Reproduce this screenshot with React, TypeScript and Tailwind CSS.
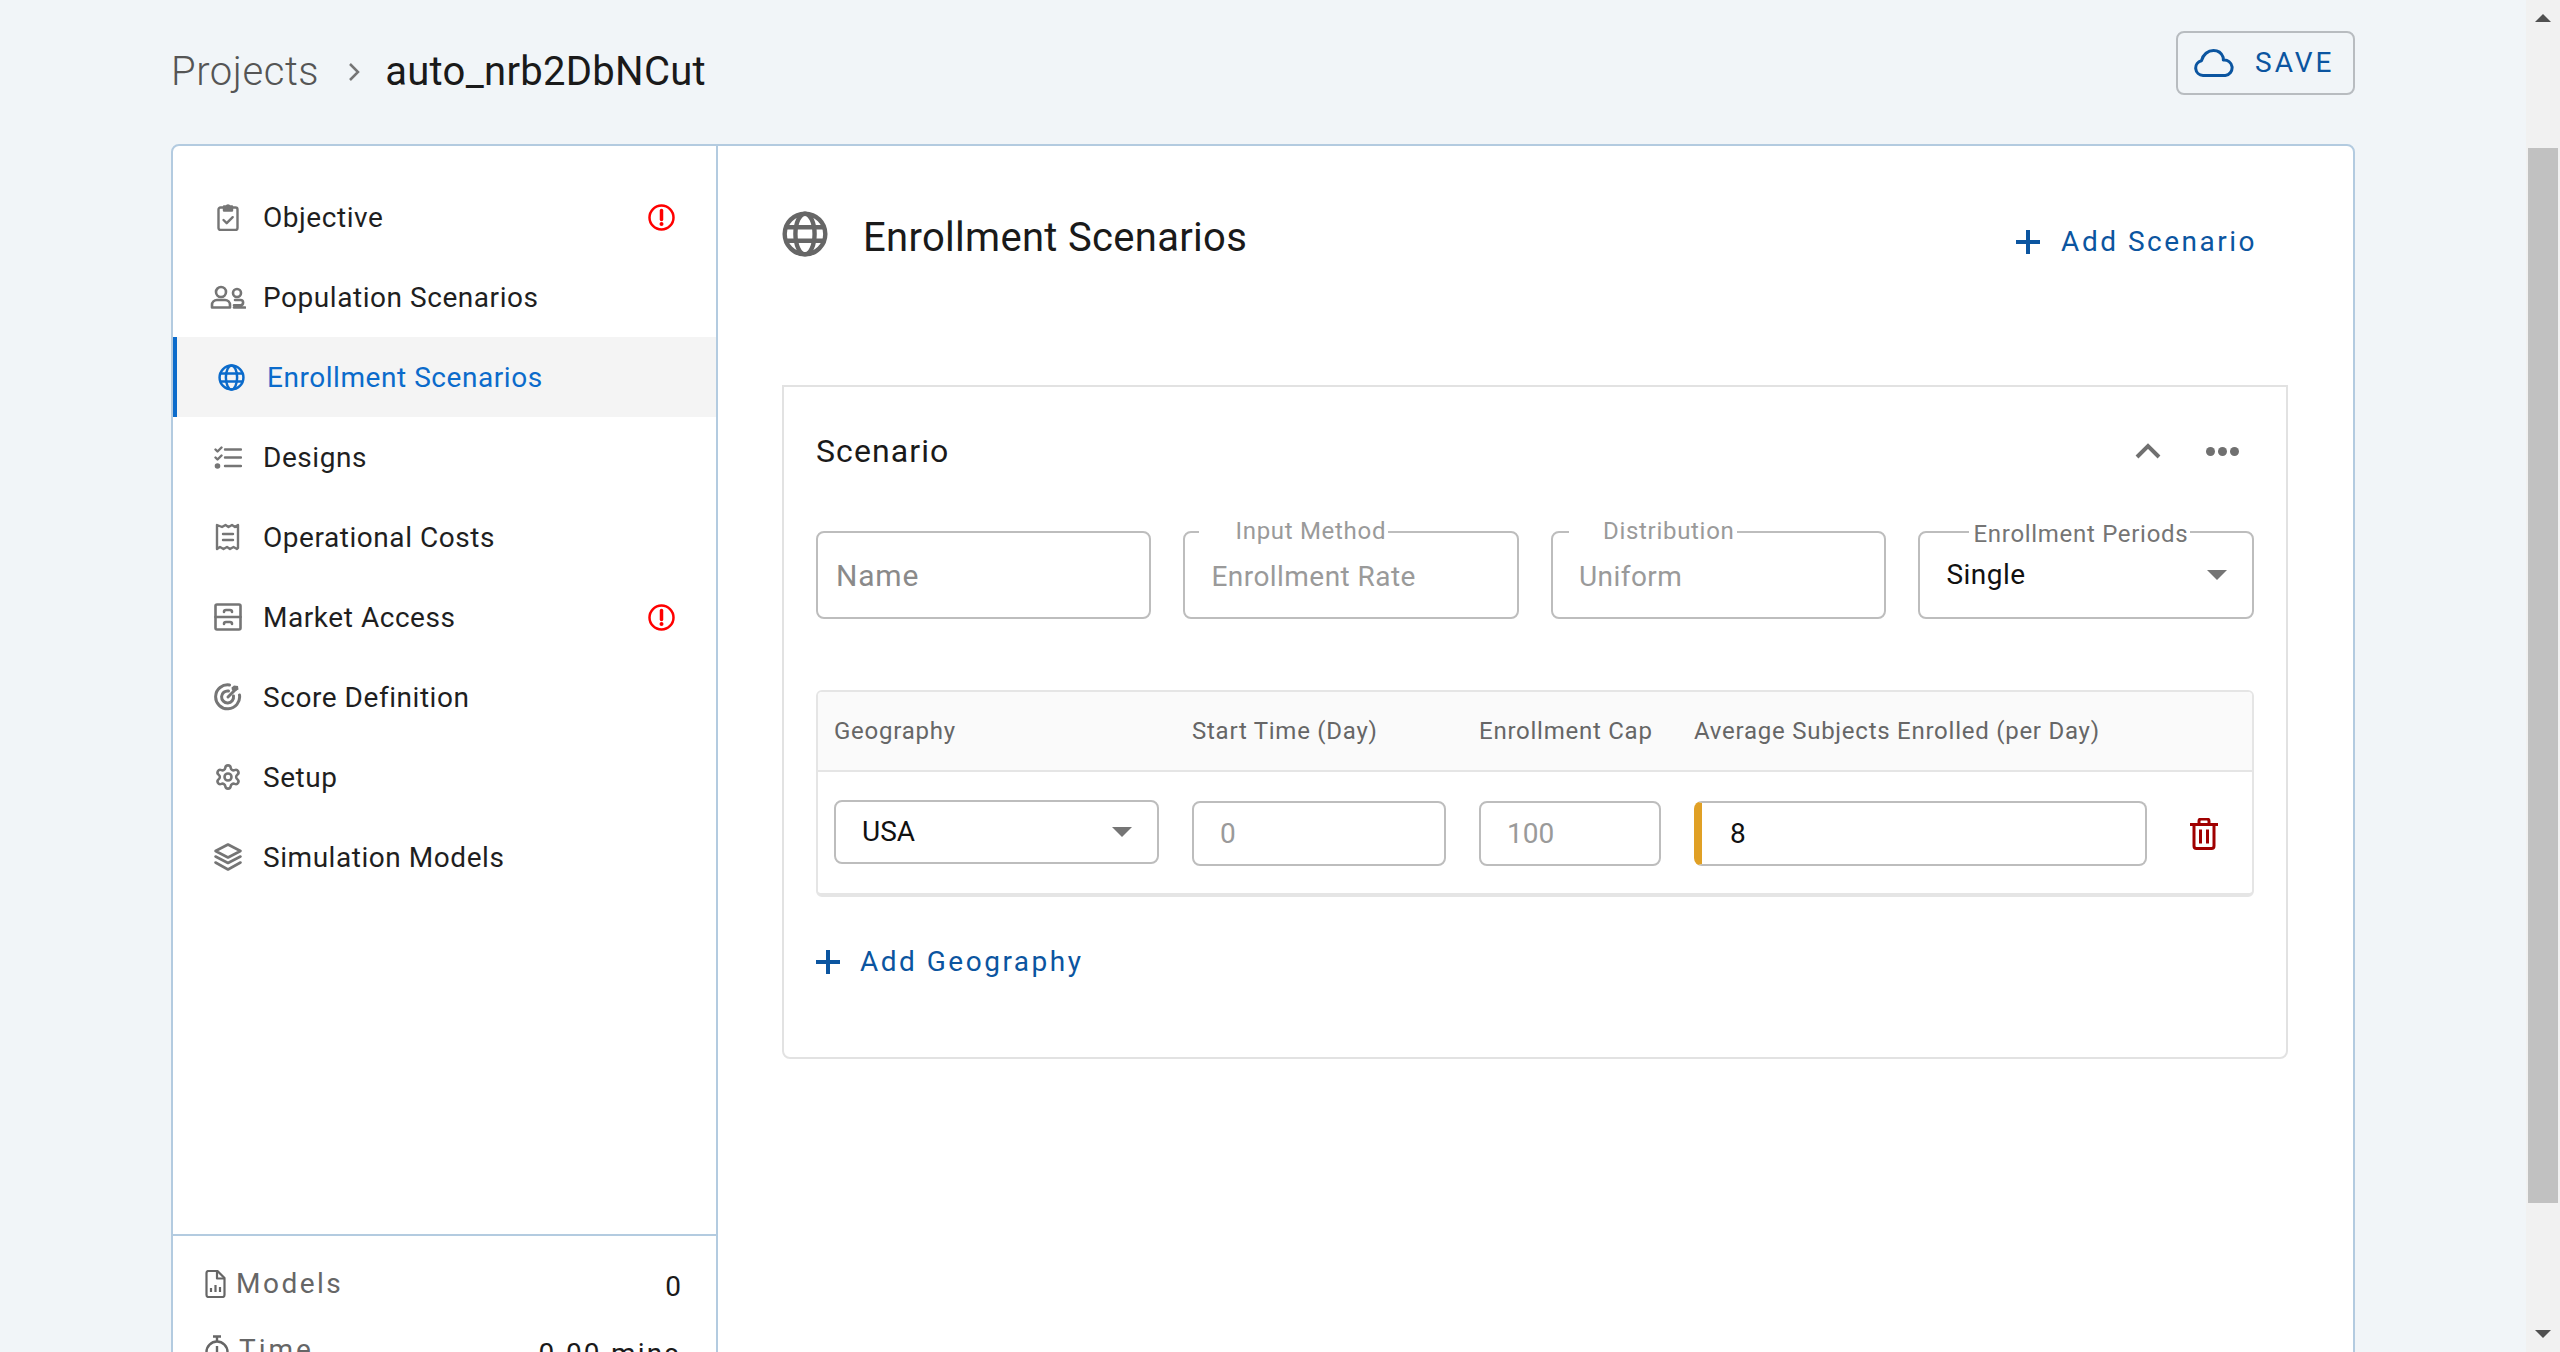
import { Settings } from "lucide-react";
import type { ReactNode } from "react";

const gray = "#757575";

function Svg({ w, h, color = gray, sw = 2, children }: { w: number; h: number; color?: string; sw?: number; children: ReactNode }) {
  return (
    <svg width={w} height={h} viewBox={`0 0 ${w} ${h}`} fill="none" stroke={color} strokeWidth={sw} strokeLinecap="round" strokeLinejoin="round">
      {children}
    </svg>
  );
}

function ObjectiveIcon() {
  return (
    <Svg w={22} h={28} sw={2.4}>
      <rect x="1.5" y="4.5" width="19" height="22.5" rx="2" />
      <path d="M7 3.5h2.5a1.6 1.6 0 0 1 3 0H15v4H7z" fill={gray} />
      <path d="M6.5 17l3.2 3.2 6-6" />
    </Svg>
  );
}

function PopulationIcon() {
  return (
    <Svg w={36} h={24} sw={2.6}>
      <circle cx="11" cy="7" r="5" />
      <path d="M2 22.5v-2.5a5 5 0 0 1 5-5h8a5 5 0 0 1 5 5v2.5z" />
      <circle cx="27" cy="8" r="4" />
      <path d="M25 15h5.5a2.6 2.6 0 0 1 0 5.2H24M24 22.5h11" />
    </Svg>
  );
}

function GlobeIcon({ size, color, sw }: { size: number; color: string; sw: number }) {
  return (
    <svg width={size} height={size} viewBox="0 0 24 24" fill="none" stroke={color} strokeWidth={sw}>
      <circle cx="12" cy="12" r="10.6" />
      <ellipse cx="12" cy="12" rx="5" ry="10.6" />
      <path d="M2 8.5h20M2 15.5h20" />
    </svg>
  );
}

function DesignsIcon() {
  return (
    <Svg w={28} h={23} sw={2.4}>
      <path d="M1.5 3.5l2 2 4-4M1.5 11.5l2 2 4-4" />
      <circle cx="3.5" cy="20" r="1.6" fill={gray} />
      <path d="M11 3.5h16M11 11.5h16M11 20h16" />
    </Svg>
  );
}

function ReceiptIcon() {
  return (
    <Svg w={26} h={28} sw={2.4}>
      <path d="M2 2v24l3-2 3.500 2 3.500-2 3 2 3.500-2 3.500 2 1-1V2l-3 2-3-2-3.500 2-3-2-3.500 2z" />
      <path d="M8 11h10M8 17h10" />
    </Svg>
  );
}

function MarketIcon() {
  return (
    <Svg w={28} h={28} sw={2.6}>
      <rect x="1.5" y="1.500" width="25" height="25" rx="1.5" />
      <path d="M1.500 14h25M10 9a2 2 0 0 1 2-2h4a2 2 0 0 1 2 2M10 21a2 2 0 0 1 2-2h4a2 2 0 0 1 2 2" />
    </Svg>
  );
}

function ScoreIcon() {
  return (
    <Svg w={28} h={28} sw={3}>
      <path d="M25.500 12a12 12 0 1 1-10-10" />
      <path d="M19.500 13a6 6 0 1 1-5-5" />
      <path d="M14 14l8-8" />
      <path d="M20 2.500l4 .5.500 3.500-3 1.500-3.500-.5-.500-3z" fill={gray} stroke="none" />
    </Svg>
  );
}

function LayersIcon() {
  return (
    <Svg w={28} h={28} sw={2.6}>
      <path d="M14 1.500l12.500 6.500L14 14.500 1.500 8z" />
      <path d="M1.500 13.500L14 20l12.500-6.500" />
      <path d="M1.500 19.500L14 26.500l12.500-7" />
    </Svg>
  );
}

function AlertIcon() {
  return (
    <svg width="27" height="27" viewBox="0 0 27 27" fill="none">
      <circle cx="13.500" cy="13.500" r="12" stroke="#ff0000" strokeWidth="2.500" />
      <path d="M13.500 6.500v9" stroke="#ff0000" strokeWidth="3.500" strokeLinecap="round" />
      <circle cx="13.500" cy="20" r="2" fill="#ff0000" />
    </svg>
  );
}

function Plus() {
  return (
    <svg width="24" height="24" viewBox="0 0 24 24" fill="none" stroke="#0b55a0" strokeWidth="4">
      <path d="M12 0v24M0 12h24" />
    </svg>
  );
}

function Caret() {
  return <div className="h-0 w-0 border-x-[10px] border-t-[10px] border-x-transparent border-t-[#757575]" />;
}

function NavItem({ icon, label, active, alert }: { icon: ReactNode; label: string; active?: boolean; alert?: boolean }) {
  return (
    <div className={active ? "flex h-[80px] items-center border-l-[4px] border-[#0b6bcb] bg-[#f4f4f4] pl-[34px] text-[#0b6bcb]" : "flex h-[80px] items-center pl-[34px] text-[#1f1f1f]"}>
      <div className="flex w-[41px] shrink-0 justify-center">{icon}</div>
      <span className="ml-[15px] pt-[2px] text-[28px] leading-[40px] tracking-[0.55px]">{label}</span>
      {alert && (
        <div className="ml-auto mr-[41px]">
          <AlertIcon />
        </div>
      )}
    </div>
  );
}

function Field({ label, labelLeft, labelPad, labelTop, dark, value, select, valueDark }: {
  label: string;
  labelLeft: string;
  labelPad: string;
  labelTop: string;
  dark?: boolean;
  value: string;
  select?: boolean;
  valueDark?: boolean;
}) {
  return (
    <div className="relative flex h-[88px] w-[336px] items-center justify-between rounded-[8px] border-2 border-[#bdbdbd] pl-[26px] pr-[25px]">
      <span className={`absolute bg-white pr-[2px] text-[24px] leading-[28px] tracking-[0.7px] ${labelLeft} ${labelPad} ${labelTop} ${dark ? "text-[#757575]" : "text-[#9a9a9a]"}`}>
        {label}
      </span>
      <span className={`text-[28px] tracking-[0.45px] ${valueDark ? "text-[#111]" : "pt-[4px] text-[#9a9a9a]"}`}>{value}</span>
      {select && <Caret />}
    </div>
  );
}

function SmallInput({ w, value, muted = true }: { w: string; value: string; muted?: boolean }) {
  return (
    <div className={`flex h-[65px] items-center rounded-[8px] border-2 border-[#bdbdbd] pl-[26px] text-[28px] ${w} ${muted ? "text-[#9a9a9a]" : "text-[#111]"}`}>
      {value}
    </div>
  );
}

export default function App() {
  return (
    <div className="flex h-[1352px] overflow-hidden bg-[#f1f5f8] font-['Roboto',sans-serif]">
      <div className="min-w-0 flex-1 px-[171px]">
        <header className="flex h-[144px] items-start justify-between">
          <div className="mt-[47px] flex items-center text-[40px] leading-[50px]">
            <span className="font-light tracking-[0.55px] text-[#555]">Projects</span>
            <svg className="ml-[28px] mr-[24px]" width="14" height="22" viewBox="0 0 14 22" fill="none" stroke="#757575" strokeWidth="2.500">
              <path d="M3 3l8 8-8 8" />
            </svg>
            <span className="tracking-[0.3px] text-[#1a1a1a]">auto_nrb2DbNCut</span>
          </div>
          <div className="mt-[31px] flex h-[64px] w-[179px] items-center rounded-[8px] border-2 border-[#b8bcc0] pl-[16px]">
            <svg width="40" height="28" viewBox="0 0 40 28" fill="none" stroke="#0b55a0" strokeWidth="3" strokeLinejoin="round">
              <path d="M9 26.500a7.500 7.500 0 0 1-1.500-14.800C9 5.500 14 1.500 19.500 1.500c4.500 0 8 2.500 9.500 6.500 0.300 1 0.400 2 0.300 3a7.800 7.800 0 0 1 2 15.500z" />
            </svg>
            <span className="ml-[21px] text-[28px] tracking-[3px] text-[#0b55a0]">SAVE</span>
          </div>
        </header>

        <div className="flex h-[1300px] rounded-t-[8px] border-2 border-[#b3cbe0] bg-white">
          <aside className="flex w-[545px] shrink-0 flex-col border-r-2 border-[#b3cbe0]">
            <nav className="h-[1088px] pt-[31px]">
              <NavItem icon={<ObjectiveIcon />} label="Objective" alert />
              <NavItem icon={<PopulationIcon />} label="Population Scenarios" />
              <NavItem icon={<GlobeIcon size={27} color="#0b6bcb" sw={2.2} />} label="Enrollment Scenarios" active />
              <NavItem icon={<DesignsIcon />} label="Designs" />
              <NavItem icon={<ReceiptIcon />} label="Operational Costs" />
              <NavItem icon={<MarketIcon />} label="Market Access" alert />
              <NavItem icon={<ScoreIcon />} label="Score Definition" />
              <NavItem icon={<Settings size={28} color={gray} strokeWidth={2.2} />} label="Setup" />
              <NavItem icon={<LayersIcon />} label="Simulation Models" />
            </nav>
            <div className="border-t-2 border-[#b3cbe0] pl-[32px] pr-[35px] pt-[28px] text-[28px] leading-[40px]">
              <div className="flex items-start justify-between">
                <div className="flex items-center text-[#666]">
                  <svg className="mr-[10px]" width="21" height="28" viewBox="0 0 21 28" fill="none" stroke="#666" strokeWidth="2.200" strokeLinejoin="round">
                    <path d="M1.500 3a2 2 0 0 1 2-2h9l7 7v17a2 2 0 0 1-2 2h-14a2 2 0 0 1-2-2z" />
                    <path d="M12 1.500V8.500h7.500M6 22v-4M10.500 22v-7M15 22v-5" />
                  </svg>
                  <span className="tracking-[2.5px]">Models</span>
                </div>
                <span className="mt-[3px] text-[#1a1a1a]">0</span>
              </div>
              <div className="mt-[23px] flex items-start justify-between">
                <div className="flex items-center text-[#666]">
                  <svg className="mr-[10px]" width="24" height="30" viewBox="0 0 24 30" fill="none" stroke="#666" strokeWidth="2.400">
                    <path d="M8 1.500h8M12 1.500v5" />
                    <circle cx="12" cy="17" r="10.500" />
                    <path d="M12 11v6" />
                  </svg>
                  <span className="tracking-[3px]">Time</span>
                </div>
                <span className="mt-[4px] tracking-[2.2px] text-[#1a1a1a]">0.00 mins</span>
              </div>
            </div>
          </aside>

          <main className="min-w-0 flex-1 pl-[64px] pr-[65px]">
            <div className="flex h-[239px] items-start">
              <div className="mt-[65px]">
                <GlobeIcon size={46} color="#666" sw={2.300} />
              </div>
              <h1 className="ml-[35px] mt-[68px] text-[40px] font-normal leading-[48px] tracking-[0.3px] text-[#1a1a1a]">Enrollment Scenarios</h1>
              <div className="ml-auto mr-[31px] mt-[72px] flex h-[48px] items-center">
                <Plus />
                <span className="ml-[21px] text-[28px] tracking-[2.5px] text-[#0b55a0]">Add Scenario</span>
              </div>
            </div>

            <section className="h-[674px] rounded-b-[8px] border-2 border-[#e2e2e2] pl-[32px] pr-[32px]">
              <div className="mb-[16px] flex h-[128px] items-center justify-between">
                <h2 className="text-[32px] font-normal tracking-[1.1px] text-[#1a1a1a]">Scenario</h2>
                <div className="flex items-center">
                  <svg width="26" height="16" viewBox="0 0 26 16" fill="none" stroke="#707070" strokeWidth="4">
                    <path d="M2 14L13 3l11 11" />
                  </svg>
                  <div className="ml-[45px] mr-[15px] flex gap-[3px]">
                    <div className="h-[9px] w-[9px] rounded-full bg-[#707070]" />
                    <div className="h-[9px] w-[9px] rounded-full bg-[#707070]" />
                    <div className="h-[9px] w-[9px] rounded-full bg-[#707070]" />
                  </div>
                </div>
              </div>

              <div className="flex gap-[32px]">
                <div className="flex h-[88px] w-[336px] items-center rounded-[8px] border-2 border-[#bdbdbd] pl-[18px] text-[30px] tracking-[0.8px] text-[#8a8a8a]">Name</div>
                <Field label="Input Method" labelLeft="left-[14px]" labelPad="pl-[36px]" labelTop="top-[-16px]" value="Enrollment Rate" />
                <Field label="Distribution" labelLeft="left-[16px]" labelPad="pl-[34px]" labelTop="top-[-16px]" value="Uniform" />
                <Field label="Enrollment Periods" labelLeft="left-[49px]" labelPad="pl-[4px]" labelTop="top-[-13px]" value="Single" select valueDark dark />
              </div>

              <div className="mt-[71px] overflow-hidden rounded-[6px] border-2 border-b-[4px] border-[#e5e5e5]">
                <div className="grid h-[80px] grid-cols-[358px_287px_215px_1fr] items-center border-b-2 border-[#e5e5e5] bg-[#fafafa] pl-[16px] text-[24px] tracking-[0.75px] text-[#666]">
                  <span>Geography</span>
                  <span>Start Time (Day)</span>
                  <span>Enrollment Cap</span>
                  <span>Average Subjects Enrolled (per Day)</span>
                </div>
                <div className="grid h-[121px] grid-cols-[358px_287px_215px_1fr] items-center pl-[16px] pt-[2px]">
                  <div className="flex h-[64px] w-[325px] -translate-y-[2px] items-center justify-between rounded-[8px] border-2 border-[#bdbdbd] pl-[26px] pr-[25px] text-[28px] text-[#111]">
                    USA
                    <Caret />
                  </div>
                  <SmallInput w="w-[254px]" value="0" />
                  <SmallInput w="w-[182px]" value="100" />
                  <div className="flex items-center">
                    <div className="flex h-[65px] w-[453px] items-center rounded-[8px] border-2 border-l-[8px] border-[#bdbdbd] border-l-[#e0a025] pl-[28px] text-[28px] text-[#111]">8</div>
                    <svg className="ml-[43px]" width="28" height="32" viewBox="0 0 28 32" fill="none" stroke="#a00000" strokeWidth="3">
                      <path d="M0 6.500h28M9 6V3a2 2 0 0 1 2-2h6a2 2 0 0 1 2 2v3M4 6.500V28a2.500 2.500 0 0 0 2.500 2.500h15A2.500 2.500 0 0 0 24 28V6.500M10.500 11.500v14M17.500 11.500v14" />
                    </svg>
                  </div>
                </div>
              </div>

              <div className="mt-[41px] flex h-[48px] items-center">
                <Plus />
                <span className="ml-[20px] text-[28px] tracking-[2.5px] text-[#0b55a0]">Add Geography</span>
              </div>
            </section>
          </main>
        </div>
      </div>

      <div className="flex w-[34px] shrink-0 flex-col items-center bg-[#f1f1f1] pt-[14px]">
        <div className="h-0 w-0 border-x-[8px] border-b-[8px] border-x-transparent border-b-[#505050]" />
        <div className="mt-[126px] h-[1055px] w-[30px] bg-[#c1c1c1]" />
        <div className="mt-[127px] h-0 w-0 border-x-[8px] border-t-[8px] border-x-transparent border-t-[#505050]" />
      </div>
    </div>
  );
}
